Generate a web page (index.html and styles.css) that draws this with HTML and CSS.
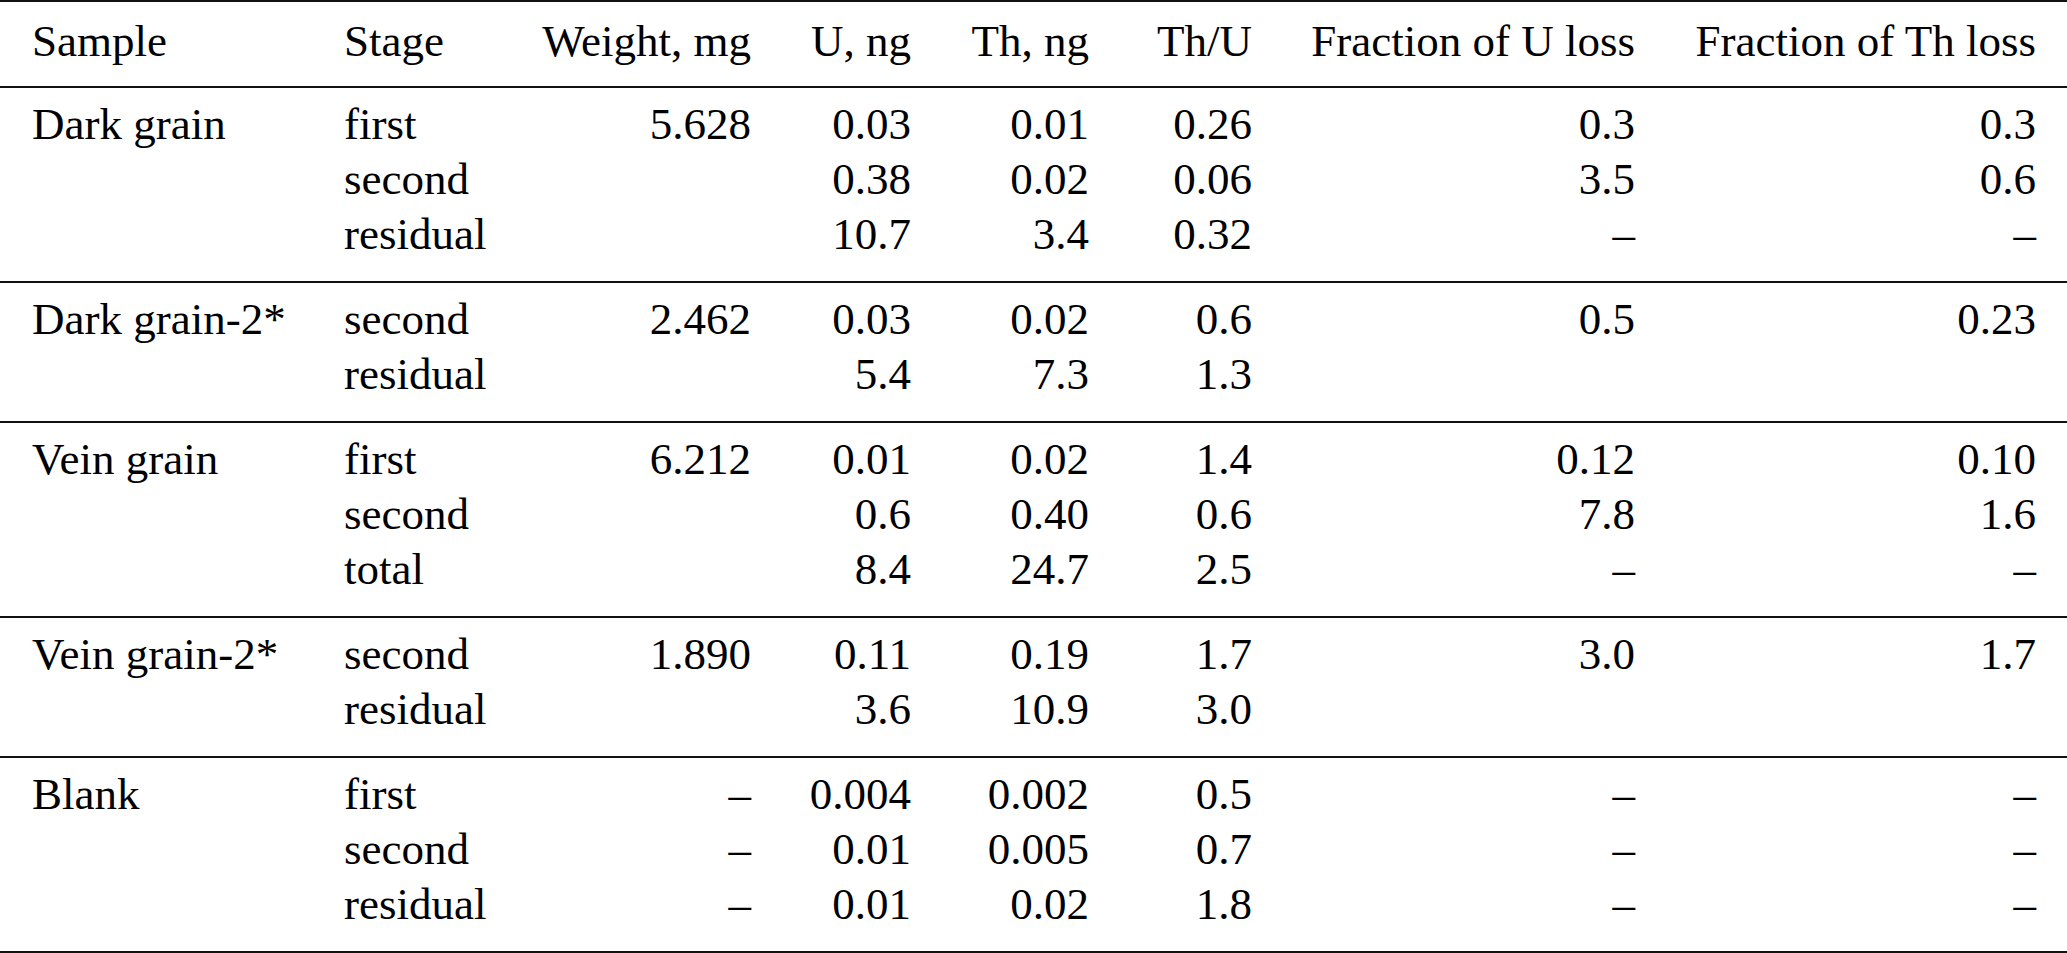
FILE: index.html
```html
<!DOCTYPE html>
<html lang="en">
<head>
<meta charset="utf-8">
<title>U and Th leaching</title>
<link rel="stylesheet" href="styles.css">
</head>
<body>
<table class="data">
  <colgroup>
    <col class="c-sample">
    <col class="c-stage">
    <col class="c-weight">
    <col class="c-u">
    <col class="c-th">
    <col class="c-ratio">
    <col class="c-fu">
    <col class="c-fth">
  </colgroup>
  <thead>
    <tr>
      <th class="l first">Sample</th>
      <th class="l">Stage</th>
      <th class="r">Weight, mg</th>
      <th class="r">U, ng</th>
      <th class="r">Th, ng</th>
      <th class="r">Th/U</th>
      <th class="r">Fraction of U loss</th>
      <th class="r last">Fraction of Th loss</th>
    </tr>
  </thead>
  <tbody class="grp">
    <tr class="top">
      <td class="l first">Dark grain</td><td class="l">first</td><td class="r">5.628</td><td class="r">0.03</td><td class="r">0.01</td><td class="r">0.26</td><td class="r">0.3</td><td class="r last">0.3</td>
    </tr>
    <tr>
      <td class="l first"></td><td class="l">second</td><td class="r"></td><td class="r">0.38</td><td class="r">0.02</td><td class="r">0.06</td><td class="r">3.5</td><td class="r last">0.6</td>
    </tr>
    <tr class="bot">
      <td class="l first"></td><td class="l">residual</td><td class="r"></td><td class="r">10.7</td><td class="r">3.4</td><td class="r">0.32</td><td class="r">–</td><td class="r last">–</td>
    </tr>
  </tbody>
  <tbody class="grp">
    <tr class="top">
      <td class="l first">Dark grain-2*</td><td class="l">second</td><td class="r">2.462</td><td class="r">0.03</td><td class="r">0.02</td><td class="r">0.6</td><td class="r">0.5</td><td class="r last">0.23</td>
    </tr>
    <tr class="bot">
      <td class="l first"></td><td class="l">residual</td><td class="r"></td><td class="r">5.4</td><td class="r">7.3</td><td class="r">1.3</td><td class="r"></td><td class="r last"></td>
    </tr>
  </tbody>
  <tbody class="grp">
    <tr class="top">
      <td class="l first">Vein grain</td><td class="l">first</td><td class="r">6.212</td><td class="r">0.01</td><td class="r">0.02</td><td class="r">1.4</td><td class="r">0.12</td><td class="r last">0.10</td>
    </tr>
    <tr>
      <td class="l first"></td><td class="l">second</td><td class="r"></td><td class="r">0.6</td><td class="r">0.40</td><td class="r">0.6</td><td class="r">7.8</td><td class="r last">1.6</td>
    </tr>
    <tr class="bot">
      <td class="l first"></td><td class="l">total</td><td class="r"></td><td class="r">8.4</td><td class="r">24.7</td><td class="r">2.5</td><td class="r">–</td><td class="r last">–</td>
    </tr>
  </tbody>
  <tbody class="grp">
    <tr class="top">
      <td class="l first">Vein grain-2*</td><td class="l">second</td><td class="r">1.890</td><td class="r">0.11</td><td class="r">0.19</td><td class="r">1.7</td><td class="r">3.0</td><td class="r last">1.7</td>
    </tr>
    <tr class="bot">
      <td class="l first"></td><td class="l">residual</td><td class="r"></td><td class="r">3.6</td><td class="r">10.9</td><td class="r">3.0</td><td class="r"></td><td class="r last"></td>
    </tr>
  </tbody>
  <tbody class="grp">
    <tr class="top">
      <td class="l first">Blank</td><td class="l">first</td><td class="r">–</td><td class="r">0.004</td><td class="r">0.002</td><td class="r">0.5</td><td class="r">–</td><td class="r last">–</td>
    </tr>
    <tr>
      <td class="l first"></td><td class="l">second</td><td class="r">–</td><td class="r">0.01</td><td class="r">0.005</td><td class="r">0.7</td><td class="r">–</td><td class="r last">–</td>
    </tr>
    <tr class="bot">
      <td class="l first"></td><td class="l">residual</td><td class="r">–</td><td class="r">0.01</td><td class="r">0.02</td><td class="r">1.8</td><td class="r">–</td><td class="r last">–</td>
    </tr>
  </tbody>
</table>
</body>
</html>
```

FILE: styles.css
```css
html, body {
  margin: 0;
  padding: 0;
  background: #ffffff;
}

.data {
  width: 2067px;
  border-collapse: collapse;
  table-layout: fixed;
  font-family: "Liberation Serif", Tinos, "Times New Roman", Times, serif;
  font-size: 45px;
  line-height: 55px;
  color: #000000;
}

.c-sample { width: 344px; }
.c-stage  { width: 186px; }
.c-weight { width: 221px; }
.c-u      { width: 160px; }
.c-th     { width: 178px; }
.c-ratio  { width: 163px; }
.c-fu     { width: 383px; }
.c-fth    { width: 432px; }

.data th,
.data td {
  padding: 0;
  font-family: inherit;
  font-weight: normal;
  vertical-align: top;
  white-space: nowrap;
}

.data .l { text-align: left; }
.data .r { text-align: right; }
.data .first { padding-left: 32px; }
.data .last { padding-right: 31px; }

.data thead {
  border-top: 2px solid #111;
  border-bottom: 2px solid #111;
}

.data thead th {
  padding-top: 12px;
  padding-bottom: 17px;
}

.data .grp {
  border-bottom: 2px solid #111;
}

.data .grp .top td {
  padding-top: 9px;
}

.data .grp .bot td {
  padding-bottom: 19px;
}
```
